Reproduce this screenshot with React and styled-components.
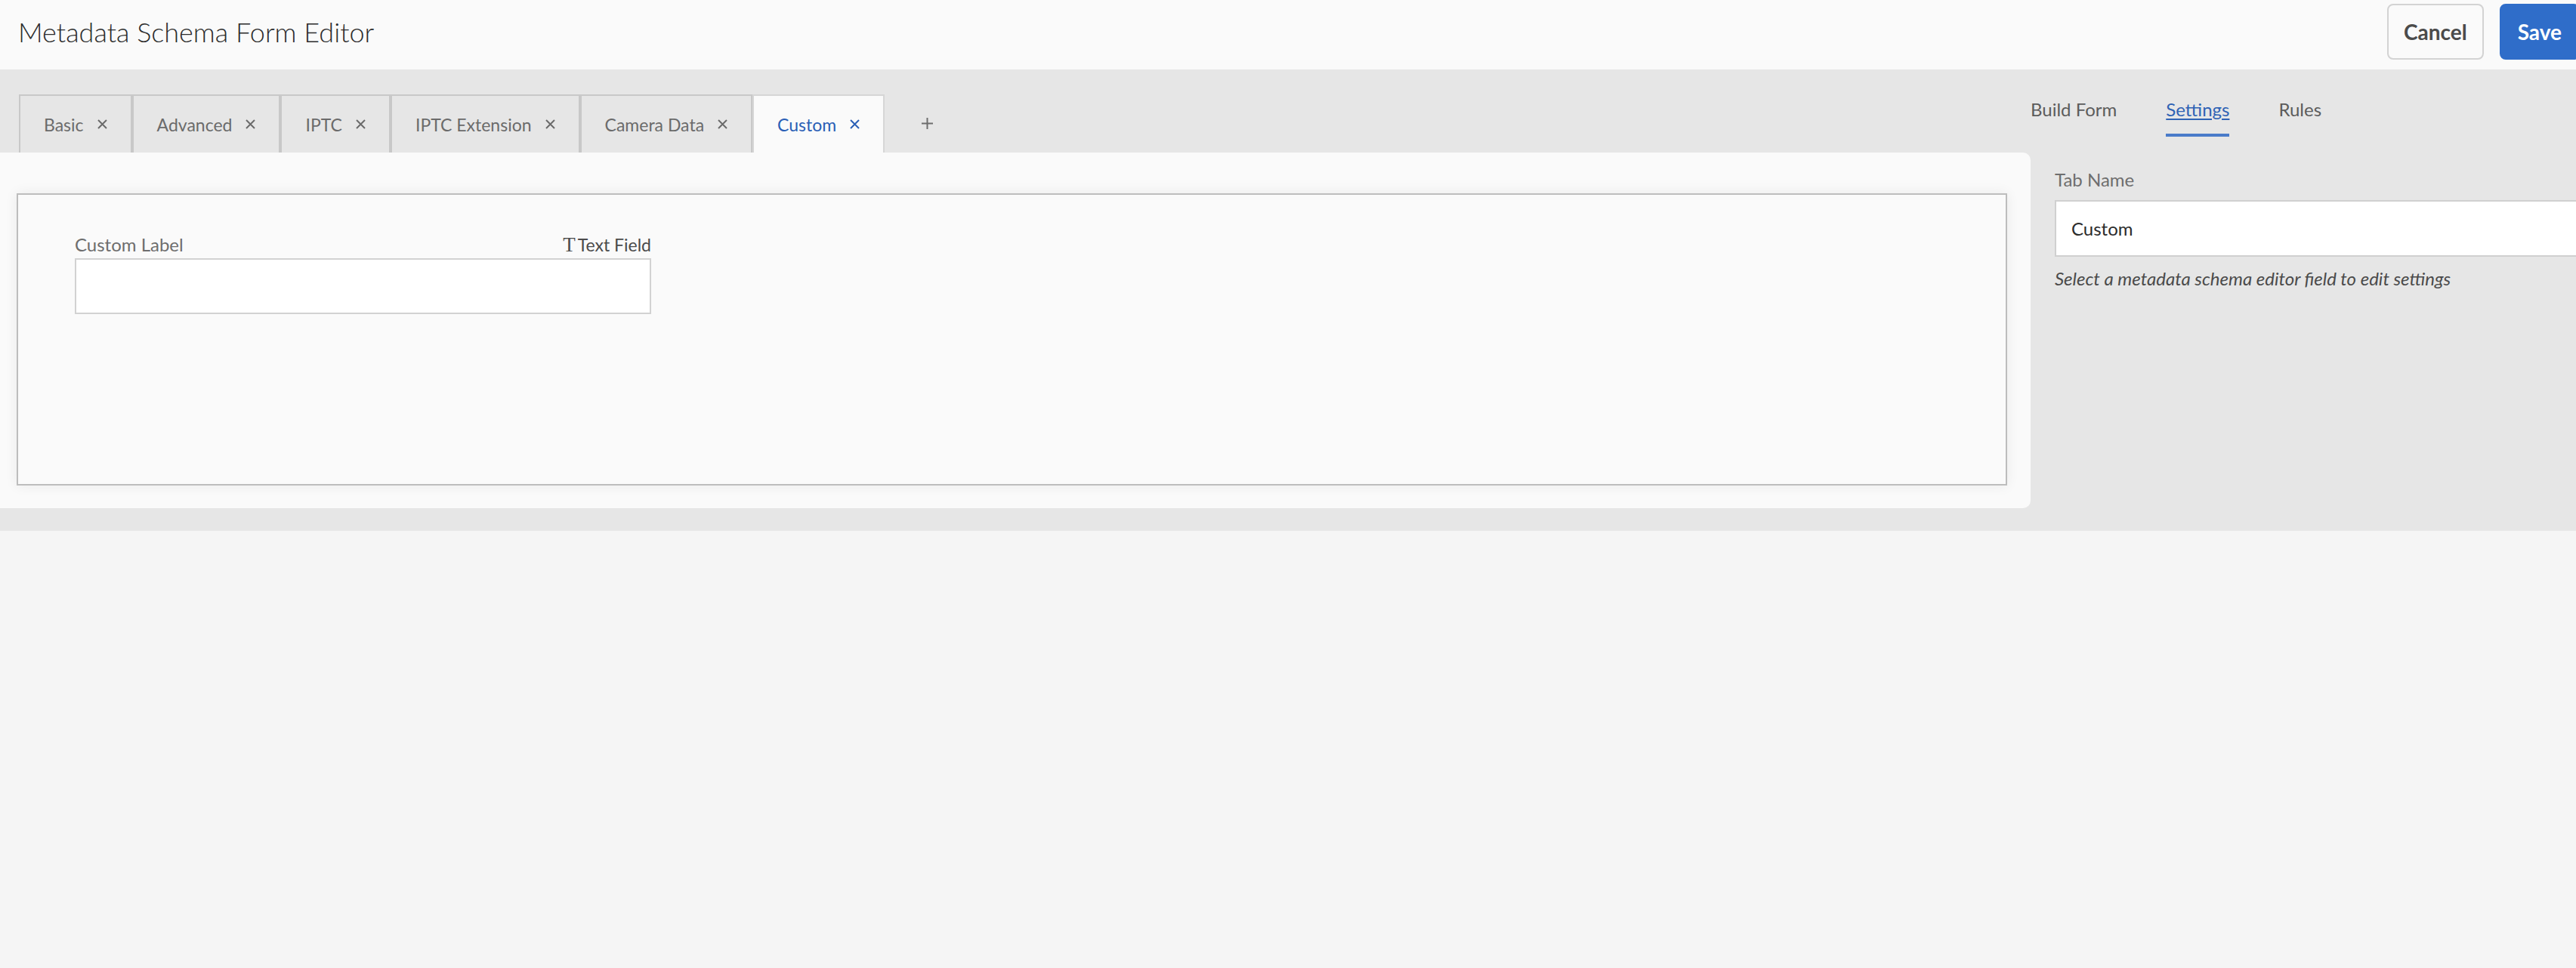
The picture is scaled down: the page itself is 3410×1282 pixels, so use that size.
import styled, { createGlobalStyle } from "styled-components";

const GlobalStyle = createGlobalStyle`
  body {
    margin: 0;
    background: #f5f5f5;
    overflow: hidden;
    font-family: Lato, "Open Sans", sans-serif;
  }
  * {
    box-sizing: border-box;
  }
`;

const Page = styled.div`
  width: 3460px;
`;

const Header = styled.header`
  height: 92px;
  background: #fafafa;
  display: flex;
  align-items: center;
  justify-content: space-between;
  padding: 0 45px 8px 24px;
`;

const Title = styled.h1`
  margin: 0;
  font-size: 36px;
  font-weight: 300;
  color: #2c2c2c;
`;

const Actions = styled.div`
  display: flex;
  gap: 21px;
`;

const Button = styled.button`
  height: 74px;
  padding: 0 ${(p) => (p.$primary ? "22px" : "20px")};
  border-radius: 8px;
  border: 2px solid ${(p) => (p.$primary ? "#2f6dc9" : "#d3d3d3")};
  background: ${(p) => (p.$primary ? "#2f6dc9" : "#fafafa")};
  color: ${(p) => (p.$primary ? "#ffffff" : "#4b4b4b")};
  font-family: Lato, sans-serif;
  font-size: 28px;
  font-weight: 700;
`;

const Workspace = styled.div`
  display: flex;
  background: #e6e6e6;
`;

const EditorColumn = styled.div`
  flex: none;
  width: 2688px;
  padding: 33px 0 30px;
`;

const TabStrip = styled.div`
  display: flex;
  align-items: stretch;
  height: 77px;
  padding-left: 25px;
`;

const Tab = styled.div`
  display: flex;
  align-items: center;
  gap: 17px;
  padding: 0 30px 0 31px;
  border: 2px solid ${(p) => (p.$active ? "#d6d6d6" : "#c8c8c8")};
  border-bottom: none;
  background: ${(p) => (p.$active ? "#fafafa" : "#e6e6e6")};
  color: ${(p) => (p.$active ? "#2a5fb6" : "#6b6b6b")};
  font-size: 23px;
`;

const AddTab = styled.div`
  display: flex;
  align-items: center;
  margin-left: 48px;
  color: #6e6e6e;
`;

const Panel = styled.div`
  background: #fafafa;
  border-radius: 0 10px 10px 0;
  padding: 54px 31px 30px 22px;
`;

const Canvas = styled.div`
  min-height: 387px;
  border: 2px solid #bdbdbd;
  background: #fafafa;
  box-shadow: 0 0 16px rgba(0, 0, 0, 0.07);
  padding: 51px 75px;
`;

const Field = styled.div`
  width: 763px;
`;

const FieldHead = styled.div`
  display: flex;
  justify-content: space-between;
  align-items: center;
  line-height: 30px;
  margin-bottom: 3px;
`;

const FieldLabel = styled.span`
  font-size: 24px;
  color: #6e6e6e;
`;

const FieldType = styled.span`
  display: flex;
  align-items: center;
  gap: 3px;
  font-size: 23px;
  color: #4b4b4b;
`;

const TypeIcon = styled.span`
  font-family: "Liberation Serif", serif;
  font-size: 27px;
  line-height: 1;
  color: #4b4b4b;
`;

const FieldInput = styled.div`
  height: 74px;
  border: 2px solid #d2d2d2;
  background: #ffffff;
`;

const Sidebar = styled.aside`
  flex: 1;
  padding-top: 38px;
`;

const SideNav = styled.nav`
  display: flex;
  gap: 65px;
`;

const NavItem = styled.span`
  font-size: 24px;
  line-height: 30px;
  padding-bottom: 17px;
  border-bottom: 4px solid ${(p) => (p.$active ? "#4a7bc9" : "transparent")};
  color: ${(p) => (p.$active ? "#2f63b5" : "#5c5c5c")};
  text-decoration: ${(p) => (p.$active ? "underline" : "none")};
  text-underline-offset: 3px;
`;

const SettingsBody = styled.div`
  padding: 42px 24px 0 32px;
`;

const SettingsLabel = styled.div`
  font-size: 24px;
  line-height: 30px;
  color: #6e6e6e;
  margin-bottom: 12px;
`;

const SettingsInput = styled.div`
  height: 75px;
  border: 2px solid #d0d0d0;
  background: #ffffff;
  display: flex;
  align-items: center;
  padding-left: 20px;
  font-size: 24px;
  color: #2c2c2c;
`;

const HelpText = styled.div`
  margin-top: 14px;
  font-size: 24px;
  line-height: 30px;
  font-style: italic;
  color: #4b4b4b;
`;

function CloseIcon() {
  return (
    <svg width="15" height="15" viewBox="0 0 15 15" fill="none">
      <path d="M2 2 L13 13 M13 2 L2 13" stroke="currentColor" strokeWidth="2" />
    </svg>
  );
}

function PlusIcon() {
  return (
    <svg width="17" height="17" viewBox="0 0 17 17" fill="none">
      <path d="M8.5 1 V16 M1 8.5 H16" stroke="currentColor" strokeWidth="2" />
    </svg>
  );
}

const tabs = ["Basic", "Advanced", "IPTC", "IPTC Extension", "Camera Data", "Custom"];

export default function App() {
  return (
    <Page>
      <GlobalStyle />
      <Header>
        <Title>Metadata Schema Form Editor</Title>
        <Actions>
          <Button>Cancel</Button>
          <Button $primary>Save</Button>
        </Actions>
      </Header>
      <Workspace>
        <EditorColumn>
          <TabStrip>
            {tabs.map((t) => (
              <Tab key={t} $active={t === "Custom"}>
                {t}
                <CloseIcon />
              </Tab>
            ))}
            <AddTab>
              <PlusIcon />
            </AddTab>
          </TabStrip>
          <Panel>
            <Canvas>
              <Field>
                <FieldHead>
                  <FieldLabel>Custom Label</FieldLabel>
                  <FieldType>
                    <TypeIcon>T</TypeIcon>Text Field
                  </FieldType>
                </FieldHead>
                <FieldInput />
              </Field>
            </Canvas>
          </Panel>
        </EditorColumn>
        <Sidebar>
          <SideNav>
            <NavItem>Build Form</NavItem>
            <NavItem $active>Settings</NavItem>
            <NavItem>Rules</NavItem>
          </SideNav>
          <SettingsBody>
            <SettingsLabel>Tab Name</SettingsLabel>
            <SettingsInput>Custom</SettingsInput>
            <HelpText>Select a metadata schema editor field to edit settings</HelpText>
          </SettingsBody>
        </Sidebar>
      </Workspace>
    </Page>
  );
}
